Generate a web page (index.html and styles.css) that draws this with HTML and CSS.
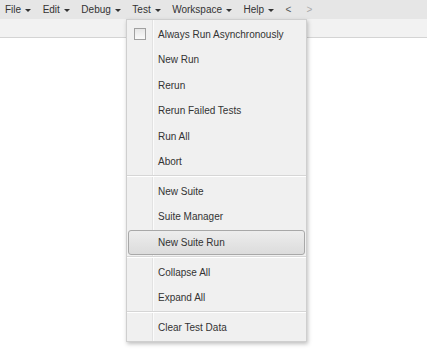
FILE: index.html
```html
<!DOCTYPE html>
<html>
<head>
<meta charset="utf-8">
<link rel="stylesheet" href="styles.css">
</head>
<body>
<div class="menubar">
  <span class="mb-item">File<i class="caret"></i></span>
  <span class="mb-item">Edit<i class="caret"></i></span>
  <span class="mb-item">Debug<i class="caret"></i></span>
  <span class="mb-item">Test<i class="caret"></i></span>
  <span class="mb-item">Workspace<i class="caret"></i></span>
  <span class="mb-item">Help<i class="caret"></i></span>
  <span class="mb-item nav">&lt;</span>
  <span class="mb-item nav dim">&gt;</span>
</div>
<div class="toolbar"></div>
<div class="content"></div>
<ul class="menu">
  <li class="item"><span class="check"></span>Always Run Asynchronously</li>
  <li class="item">New Run</li>
  <li class="item">Rerun</li>
  <li class="item">Rerun Failed Tests</li>
  <li class="item">Run All</li>
  <li class="item">Abort</li>
  <li class="sep"></li>
  <li class="item">New Suite</li>
  <li class="item">Suite Manager</li>
  <li class="item active">New Suite Run</li>
  <li class="sep"></li>
  <li class="item">Collapse All</li>
  <li class="item">Expand All</li>
  <li class="sep"></li>
  <li class="item">Clear Test Data</li>
</ul>
</body>
</html>
```

FILE: styles.css
```css
html, body {
  margin: 0;
  padding: 0;
  background: #fff;
  font-family: "Liberation Sans", Arial, sans-serif;
  font-size: 10px;
  color: #333;
}
.menubar {
  height: 19px;
  background: #e6e6e6;
  display: flex;
  align-items: center;
  padding-left: 5px;
  box-sizing: border-box;
}
.mb-item {
  display: flex;
  align-items: center;
  margin-right: 11.5px;
  color: #333;
}
.caret {
  display: inline-block;
  width: 0;
  height: 0;
  border-left: 3px solid transparent;
  border-right: 3px solid transparent;
  border-top: 3px solid #333;
  margin-left: 4px;
  margin-top: 1px;
}
.mb-item.nav { margin-right: 15px; margin-left: 0; color: #555; }
.mb-item.dim { color: #aaa; }
.toolbar {
  height: 18px;
  background: #f2f2f2;
  border-bottom: 1px solid #d4d4d4;
}
.menu {
  position: absolute;
  left: 126px;
  top: 19px;
  width: 181px;
  box-sizing: border-box;
  margin: 0;
  padding: 2px 1px 1px 1px;
  list-style: none;
  border: 1px solid #cfcfcf;
  background: linear-gradient(to right, #f0f0f0 0, #f0f0f0 25px, #e2e2e2 25px, #e2e2e2 26px, #fbfbfb 26px, #fbfbfb 27px, #f0f0f0 27px);
  box-shadow: 1px 2px 4px rgba(0,0,0,0.25);
}
.item {
  position: relative;
  height: 25.4px;
  line-height: 25.4px;
  padding-left: 30px;
  box-sizing: border-box;
  color: #333;
  white-space: nowrap;
}
.item.active {
  margin: 0;
  padding-left: 29px;
  border: 1px solid #a8a8a8;
  border-radius: 3px;
  line-height: 23.4px;
  background: linear-gradient(#ededed, #dcdcdc);
}
.check {
  position: absolute;
  left: 6px;
  top: 6px;
  width: 10px;
  height: 10px;
  border: 1px solid #a0a0a0;
  background: linear-gradient(#e6e6e6, #fafafa);
}
.sep {
  height: 4.6px;
  box-sizing: border-box;
  margin: 0;
  padding: 0;
  position: relative;
}
.sep::before {
  content: "";
  position: absolute;
  left: -1px;
  right: -1px;
  top: 1px;
  height: 1px;
  background: #d6d6d6;
}
.sep::after {
  content: "";
  position: absolute;
  left: -1px;
  right: -1px;
  top: 2px;
  height: 1px;
  background: #fff;
}
```
